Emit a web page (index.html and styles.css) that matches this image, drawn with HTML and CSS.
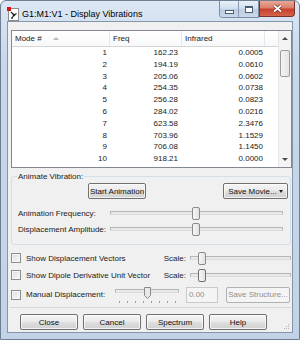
FILE: index.html
```html
<!DOCTYPE html>
<html lang="en">
<head>
    <meta charset="UTF-8">
    <title>G1:M1:V1 - Display Vibrations</title>
    <link rel="stylesheet" href="styles.css">
</head>
<body>
    <div class="window">
        <div class="titlebar">
            <svg class="app-icon" width="12" height="14" viewBox="0 0 12 14">
                <rect x="1.5" y="1.5" width="10" height="12" fill="#fff" stroke="#8d8d8d"/>
                <path d="M4 5 L7 8 L5 11 M7 8 L9.5 6.5" stroke="#222" stroke-width="1.2" fill="none"/>
                <circle cx="7" cy="8" r="1.3" fill="#222"/>
                <circle cx="5" cy="11" r="1" fill="#444"/>
                <rect x="0" y="0" width="4" height="4" fill="#e01010"/>
            </svg>
            <span class="title">G1:M1:V1 - Display Vibrations</span>
            <div class="caption">
                <div class="cap-group">
                    <span class="cap cap-min"><span class="glyph-min"></span></span>
                    <span class="cap cap-max"><span class="glyph-max"></span></span>
                </div>
                <span class="cap cap-close">
                    <svg width="11" height="9" viewBox="0 0 11 9">
                        <path d="M2 1.5 L9 7.5 M9 1.5 L2 7.5" stroke="#6b2a20" stroke-width="3.2"/>
                        <path d="M2 1.5 L9 7.5 M9 1.5 L2 7.5" stroke="#fff" stroke-width="1.8"/>
                    </svg>
                </span>
            </div>
        </div>

        <div class="client">
            <div class="listview">
                <div class="lv-main">
                    <div class="lv-header">
                        <div class="lv-col">Mode # <span class="sort-arrow"></span></div>
                        <div class="lv-col">Freq</div>
                        <div class="lv-col">Infrared</div>
                        <div class="lv-col last"></div>
                    </div>
                    <div class="lv-body">
                        <div class="lv-row"><span>1</span><span>162.23</span><span>0.0005</span></div>
                        <div class="lv-row"><span>2</span><span>194.19</span><span>0.0610</span></div>
                        <div class="lv-row"><span>3</span><span>205.06</span><span>0.0602</span></div>
                        <div class="lv-row"><span>4</span><span>254.35</span><span>0.0738</span></div>
                        <div class="lv-row"><span>5</span><span>256.28</span><span>0.0823</span></div>
                        <div class="lv-row"><span>6</span><span>284.02</span><span>0.0216</span></div>
                        <div class="lv-row"><span>7</span><span>623.58</span><span>2.3476</span></div>
                        <div class="lv-row"><span>8</span><span>703.96</span><span>1.1529</span></div>
                        <div class="lv-row"><span>9</span><span>706.08</span><span>1.1450</span></div>
                        <div class="lv-row"><span>10</span><span>918.21</span><span>0.0000</span></div>
                    </div>
                </div>
                <div class="vscroll">
                    <div class="sb-btn"><span class="arrow-up"></span></div>
                    <div class="sb-track"><div class="sb-thumb"></div></div>
                    <div class="sb-btn"><span class="arrow-down"></span></div>
                </div>
            </div>

            <div class="group">
                <span class="group-title">Animate Vibration:</span>
                <div class="group-row buttons-row">
                    <button class="btn start-btn">Start Animation</button>
                    <button class="btn movie-btn">Save Movie... <span class="drop"></span></button>
                </div>
                <div class="group-row slider-row first">
                    <span class="slider-label">Animation Frequency:</span>
                    <div class="slider wide">
                        <div class="track"></div>
                        <div class="thumb" style="left: 82px"></div>
                    </div>
                </div>
                <div class="group-row slider-row">
                    <span class="slider-label">Displacement Amplitude:</span>
                    <div class="slider wide">
                        <div class="track"></div>
                        <div class="thumb" style="left: 82px"></div>
                    </div>
                </div>
            </div>

            <div class="check-row row-a">
                <span class="checkbox"></span>
                <span class="check-label">Show Displacement Vectors</span>
                <span class="scale-label">Scale:</span>
                <div class="slider scale">
                    <div class="track"></div>
                    <div class="thumb" style="left: 8px"></div>
                </div>
            </div>
            <div class="check-row row-b">
                <span class="checkbox"></span>
                <span class="check-label">Show Dipole Derivative Unit Vector</span>
                <span class="scale-label">Scale:</span>
                <div class="slider scale">
                    <div class="track"></div>
                    <div class="thumb focus" style="left: 8px"></div>
                </div>
            </div>
            <div class="check-row row-c">
                <span class="checkbox"></span>
                <span class="check-label manual">Manual Displacement:</span>
                <div class="slider manual-slider">
                    <div class="track"></div>
                    <svg class="pointer" style="left: 29px" width="7" height="12" viewBox="0 0 7 12">
                        <path d="M0.5 0.5 H6.5 V8.5 L3.5 11.5 L0.5 8.5 Z" fill="#e9e9e9" stroke="#8a8a8a"/>
                    </svg>
                    <div class="ticks">
                        <i></i><i></i><i></i><i></i><i></i><i></i><i></i><i></i>
                    </div>
                </div>
                <div class="textbox">0.00</div>
                <button class="btn disabled structure-btn">Save Structure...</button>
            </div>

            <div class="separator"></div>

            <div class="bottom-buttons">
                <button class="btn">Close</button>
                <button class="btn">Cancel</button>
                <button class="btn">Spectrum</button>
                <button class="btn">Help</button>
            </div>

            <svg class="grip" width="7" height="7" viewBox="0 0 7 7">
                <rect x="5" y="1" width="1" height="1" fill="#b5b5b5"/>
                <rect x="3" y="3" width="1" height="1" fill="#b5b5b5"/>
                <rect x="5" y="3" width="1" height="1" fill="#b5b5b5"/>
                <rect x="1" y="5" width="1" height="1" fill="#b5b5b5"/>
                <rect x="3" y="5" width="1" height="1" fill="#b5b5b5"/>
                <rect x="5" y="5" width="1" height="1" fill="#b5b5b5"/>
            </svg>
        </div>
    </div>
</body>
</html>
```

FILE: styles.css
```css
body, html {
    margin: 0;
    padding: 0;
    background-color: #ffffff;
    font-family: "Liberation Sans", Arial, sans-serif;
    font-size: 8px;
    color: #1a1a1a;
}

.window {
    width: 300px;
    height: 340px;
    box-sizing: border-box;
    border: 1px solid #6e7f93;
    border-radius: 6px 6px 0 0;
    background: linear-gradient(#dce7f4, #c8d8eb 60px, #c2d3e8);
    padding: 0 6px 6px 6px;
    display: flex;
    flex-direction: column;
}

/* title bar */
.titlebar {
    height: 20px;
    display: flex;
    align-items: flex-start;
}

.app-icon {
    margin-top: 6px;
    display: block;
}

.title {
    font-size: 9px;
    color: #000;
    margin-left: 3px;
    margin-top: 8px;
    line-height: 10px;
}

.caption {
    margin-left: auto;
    margin-right: -2px;
    display: flex;
}

.cap-group {
    display: flex;
    border: 1px solid #7d8ea4;
    border-top: none;
    border-radius: 0 0 0 4px;
    overflow: hidden;
}

.cap {
    height: 16px;
    display: flex;
    align-items: center;
    justify-content: center;
    box-sizing: border-box;
}

.cap-min, .cap-max {
    width: 19px;
    background: linear-gradient(#e9f0f8, #d3e0ef 45%, #bccde2 55%, #c9d8ea);
}

.cap-min {
    border-right: 1px solid #8a9bb0;
}

.glyph-min {
    width: 7px;
    height: 2px;
    margin-top: 6px;
    background: #fff;
    border: 1px solid #4b5d74;
}

.glyph-max {
    width: 6px;
    height: 4px;
    border: 1px solid #4b5d74;
    border-top-width: 2px;
    background: #fff;
    box-shadow: inset 0 0 0 1px #fff;
}

.cap-close {
    width: 36px;
    border: 1px solid #7a3328;
    border-top: none;
    border-radius: 0 0 4px 0;
    background: linear-gradient(#eaa897, #d9806c 45%, #c7412c 55%, #d5634c);
}

.cap-close svg {
    display: block;
}

/* client area */
.client {
    flex: 1;
    position: relative;
    border: 1px solid #8496ab;
    background-color: #f0f0f0;
    padding: 8px 0 0 3px;
    display: flex;
    flex-direction: column;
}

/* list view */
.listview {
    height: 138px;
    box-sizing: border-box;
    border: 1px solid #828790;
    background-color: #ffffff;
    display: flex;
}

.lv-main {
    flex: 1;
    overflow: hidden;
}

.lv-header, .lv-row {
    display: grid;
    grid-template-columns: 98px 72px 83px 1fr;
}

.lv-header {
    height: 15px;
    background: linear-gradient(#ffffff, #f7f8f9);
    border-bottom: 1px solid #d5d5d5;
}

.lv-col {
    line-height: 15px;
    padding-left: 3px;
    border-right: 1px solid #e3e8ee;
    color: #222;
}

.lv-col.last {
    border-right: none;
}

.sort-arrow {
    display: inline-block;
    margin-left: 9px;
    vertical-align: 1px;
    border-left: 3px solid transparent;
    border-right: 3px solid transparent;
    border-bottom: 3px solid #b8bcc2;
}

.lv-row {
    height: 11.8px;
    line-height: 11.8px;
}

.lv-row span {
    text-align: right;
    padding-right: 4px;
}

.lv-row span:first-child {
    padding-right: 3px;
}

.lv-row span:nth-child(3) {
    padding-right: 2px;
}

/* scroll bar */
.vscroll {
    width: 12px;
    display: flex;
    flex-direction: column;
    background: #f4f4f4;
    border-left: 1px solid #e6e6e6;
}

.sb-btn {
    height: 15px;
    display: flex;
    align-items: center;
    justify-content: center;
}

.arrow-up, .arrow-down {
    border-left: 3px solid transparent;
    border-right: 3px solid transparent;
}

.arrow-up {
    border-bottom: 3px solid #4a4a4a;
}

.arrow-down {
    border-top: 3px solid #4a4a4a;
}

.sb-track {
    flex: 1;
    padding-top: 4px;
}

.sb-thumb {
    height: 25px;
    margin: 0 1px;
    border: 1px solid #9b9b9b;
    border-radius: 2px;
    background: linear-gradient(90deg, #f3f3f3, #e4e4e4);
}

/* group box */
.group {
    margin-top: 8px;
    width: 280px;
    height: 69px;
    box-sizing: border-box;
    border: 1px solid #d5dfe5;
    border-radius: 3px;
    padding: 0 2px 0 6px;
    display: flex;
    flex-direction: column;
}

.group-title {
    align-self: flex-start;
    margin: -6px 0 0 -1px;
    padding: 0 1px;
    line-height: 11px;
    background-color: #f0f0f0;
}

.group-row {
    display: flex;
    align-items: center;
}

.buttons-row {
    height: 16px;
    margin-top: 1px;
}

.slider-row {
    height: 14px;
    margin-top: 2px;
}

.slider-row.first {
    margin-top: 7px;
}

.slider-label {
    width: 92px;
}

/* buttons */
.btn {
    height: 16px;
    box-sizing: border-box;
    padding: 0;
    font-family: inherit;
    font-size: 8px;
    color: #111;
    border: 1px solid #707070;
    border-radius: 2px;
    background: linear-gradient(#f4f4f4, #ebebeb 45%, #dddddd 55%, #d1d1d1);
    box-shadow: inset 0 0 0 1px rgba(255, 255, 255, 0.7);
}

.start-btn {
    width: 58px;
    margin-left: 70px;
}

.movie-btn {
    width: 65px;
    margin-left: auto;
}

.drop {
    display: inline-block;
    vertical-align: 1px;
    border-left: 2.5px solid transparent;
    border-right: 2.5px solid transparent;
    border-top: 3px solid #222;
}

.btn.disabled {
    color: #8f8f8f;
    border-color: #adb2b5;
    background: #f4f4f4;
    box-shadow: none;
}

/* sliders */
.slider {
    position: relative;
    height: 14px;
}

.slider.wide {
    width: 173px;
}

.track {
    position: relative;
    top: 5px;
    height: 4px;
    box-sizing: border-box;
    border: 1px solid #b6b6b6;
    border-bottom-color: #dcdcdc;
    border-radius: 1px;
    background-color: #e7eaea;
}

.thumb {
    position: absolute;
    top: 1px;
    width: 8px;
    height: 13px;
    box-sizing: border-box;
    border: 1px solid #8a8a8a;
    border-radius: 2px;
    background: linear-gradient(90deg, #f6f6f6, #e2e2e2);
}

.thumb.focus {
    border-color: #6f6f6f;
    width: 8px;
}

/* checkbox rows */
.check-row {
    display: flex;
    align-items: center;
    width: 280px;
}

.row-a {
    height: 14px;
    margin-top: 6px;
}

.row-b {
    height: 14px;
    margin-top: 3px;
}

.row-c {
    height: 17px;
    margin-top: 4px;
}

.checkbox {
    width: 10px;
    height: 10px;
    box-sizing: border-box;
    border: 1px solid #8e8f8f;
    background: linear-gradient(135deg, #dcdcdc, #fbfbfb);
    box-shadow: inset 0 0 0 1px #f4f4f4;
}

.check-label {
    margin-left: 5px;
}

.check-label.manual {
    width: 89px;
}

.scale-label {
    margin-left: auto;
    margin-right: 4px;
}

.slider.scale {
    width: 101px;
}

.manual-slider {
    width: 64px;
    height: 17px;
}

.manual-slider .track {
    top: 3px;
}

.pointer {
    position: absolute;
    top: 1px;
    display: block;
}

.ticks {
    position: absolute;
    left: 0;
    right: 0;
    top: 15px;
    padding: 0 3px 0 4px;
    display: flex;
    justify-content: space-between;
}

.ticks i {
    width: 1px;
    height: 2px;
    background-color: #9a9a9a;
}

.textbox {
    width: 32px;
    height: 16px;
    box-sizing: border-box;
    margin-left: 7px;
    border: 1px solid #c9c9c9;
    background-color: #f4f4f4;
    color: #8f8f8f;
    line-height: 14px;
    padding-left: 2px;
}

.structure-btn {
    width: 64px;
    margin-left: 8px;
}

.separator {
    margin: 4px 1px 0 -1px;
    border-top: 1px solid #d8d8d8;
}

.bottom-buttons {
    display: flex;
    gap: 5px;
    margin-top: 6px;
    padding-left: 9px;
}

.bottom-buttons .btn {
    width: 58px;
}

.grip {
    position: absolute;
    right: 2px;
    bottom: 2px;
}
```
